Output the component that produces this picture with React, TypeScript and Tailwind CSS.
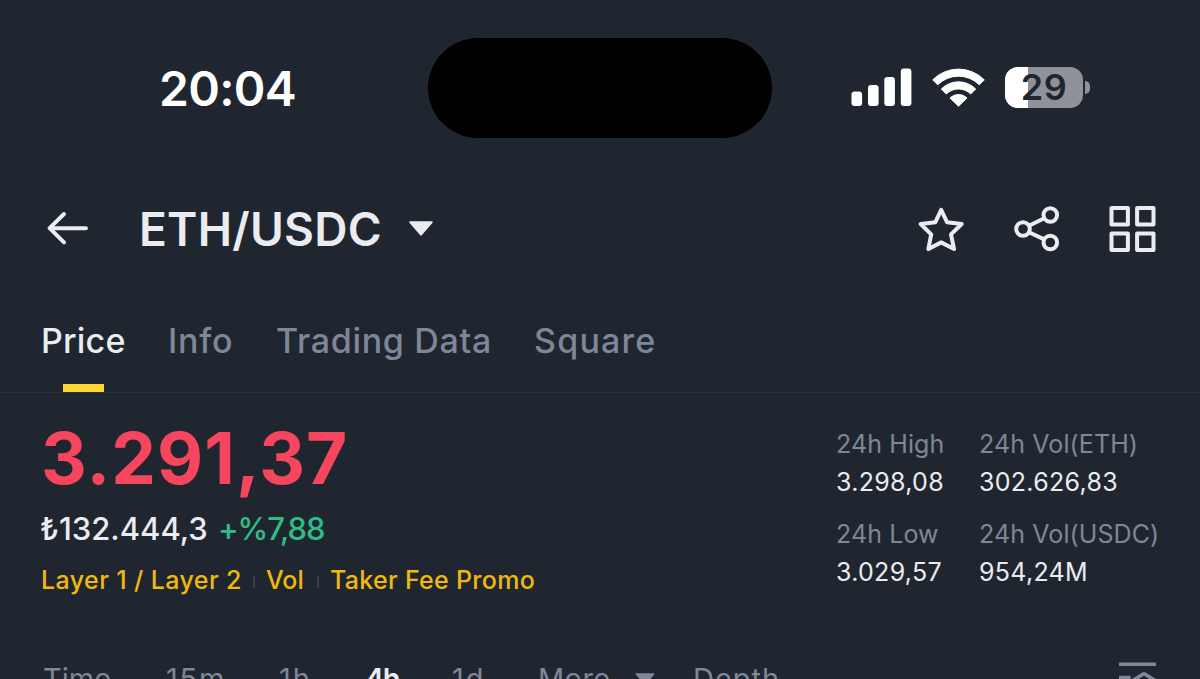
import clsx from 'clsx';

interface Tab {
  label: string;
  className: string;
}

interface Stat {
  label: string;
  value: string;
}

const tabs: Tab[] = [
  { label: 'Price', className: 'w-[127px] tracking-[0.2px]' },
  { label: 'Info', className: 'w-[108px] tracking-[0.8px]' },
  { label: 'Trading Data', className: 'w-[258px] tracking-[0.7px]' },
  { label: 'Square', className: 'tracking-[1.2px]' },
];

const stats: Stat[] = [
  { label: '24h High', value: '3.298,08' },
  { label: '24h Vol(ETH)', value: '302.626,83' },
  { label: '24h Low', value: '3.029,57' },
  { label: '24h Vol(USDC)', value: '954,24M' },
];

function SignalIcon() {
  return (
    <svg width="61" height="38" viewBox="0 0 61 38" fill="#fff">
      <rect x="0.5" y="23.5" width="10.6" height="14.5" rx="3" />
      <rect x="17" y="17" width="10.6" height="21" rx="3" />
      <rect x="33.3" y="9" width="10.6" height="29" rx="3" />
      <rect x="49.8" y="0.5" width="10.6" height="37.5" rx="3" />
    </svg>
  );
}

function WifiIcon() {
  return (
    <svg width="53" height="39" viewBox="0 0 53 39" fill="#fff" stroke="#fff" strokeWidth="1" strokeLinejoin="round">
      <path d="M0.7 11.8A36.5 36.5 0 0 1 52.3 11.8L47.3 16.8A29.5 29.5 0 0 0 5.7 16.8Z" />
      <path d="M9.3 21A24.2 24.2 0 0 1 43.7 21L38.7 26A17.3 17.3 0 0 0 14.3 26Z" />
      <path d="M18 30A12 12 0 0 1 35 30L26.5 38.2Z" />
    </svg>
  );
}

function Battery({ level }: { level: number }) {
  return (
    <div className="flex items-center gap-[2px]">
      <div className="relative flex h-[41px] w-[78px] items-center justify-center overflow-hidden rounded-[13px] bg-[#8f9299]">
        <div className="absolute inset-y-0 left-0 bg-white" style={{ width: `${level}%` }} />
        <span className="relative text-[36px] leading-none font-semibold tracking-[0.5px] text-[#202630]">{level}</span>
      </div>
      <div className="h-[13px] w-[5px] rounded-r-full bg-[#8f9299]" />
    </div>
  );
}

function StatusBar() {
  return (
    <div className="flex h-[176px] shrink-0 items-center">
      <span className="w-[428px] pt-[2px] pl-[159px] text-[48px] leading-none font-semibold tracking-[-0.7px] text-white">20:04</span>
      <div className="h-[100px] w-[344px] rounded-full bg-black" />
      <div className="flex items-center pb-[2px] pl-[79px]">
        <SignalIcon />
        <div className="w-5" />
        <WifiIcon />
        <div className="w-5" />
        <Battery level={29} />
      </div>
    </div>
  );
}

function Caret({ className }: { className: string }) {
  return (
    <svg viewBox="0 0 24 15" className={className} fill="currentColor" stroke="currentColor" strokeWidth="2" strokeLinejoin="round">
      <path d="M1.2 1.2H22.8L12 13.6Z" />
    </svg>
  );
}

function PairHeader() {
  return (
    <div className="flex h-[106px] shrink-0 items-center pr-[44px] pl-[47px] text-[#eaecef]">
      <svg width="42" height="34" viewBox="0 0 42 34" fill="none" stroke="currentColor" strokeWidth="3.9" strokeLinecap="round" strokeLinejoin="round">
        <path d="M39 16.2H3M17 2L2.6 16.2L17 30.4" />
      </svg>
      <h1 className="ml-[50px] w-[270px] text-[46px] leading-none font-semibold tracking-[0.25px]">ETH/USDC</h1>
      <Caret className="mb-[2px] h-[15px] w-6" />
      <div className="ml-auto flex items-center">
        <svg width="46" height="44" viewBox="0 0 46 44" fill="none" stroke="currentColor" strokeWidth="4" strokeLinejoin="round">
          <path d="M23.2 2.8L29 15.2L43.7 17L33 27.4L36 42L23.2 35.4L10.4 42L13.2 27.4L2.7 17L17.4 15.2Z" />
        </svg>
        <svg className="ml-[50px]" width="46" height="46" viewBox="0 0 46 46" fill="none" stroke="currentColor" strokeWidth="4">
          <circle cx="9" cy="23" r="6.8" />
          <circle cx="36.3" cy="9" r="6.8" />
          <circle cx="36.3" cy="36.5" r="6.8" />
          <path d="M15 19.8L30.2 12.2M15 26.2L30.2 33.4" />
        </svg>
        <svg className="ml-[49px]" width="47" height="46" viewBox="0 0 47 46" fill="none" stroke="currentColor" strokeWidth="4" strokeLinejoin="round">
          <rect x="2.5" y="2" width="16.4" height="16.4" />
          <rect x="28.1" y="2" width="16.4" height="16.4" />
          <rect x="2.5" y="27.5" width="16.4" height="16.4" />
          <rect x="28.1" y="27.5" width="16.4" height="16.4" />
        </svg>
      </div>
    </div>
  );
}

function TabBar() {
  return (
    <div className="flex h-[111px] shrink-0 border-b border-[#2e343e] pl-[41px]">
      {tabs.map((tab, index) => (
        <button
          key={tab.label}
          type="button"
          className={clsx(
            'flex flex-col items-start pt-[39px] text-left text-[34px] leading-[40px] font-medium whitespace-nowrap',
            tab.className,
            index === 0 ? 'text-[#eaecef]' : 'text-[#7f8697]',
          )}
        >
          {tab.label}
          {index === 0 && <span className="mt-[23px] ml-[22px] h-2 w-[41px] bg-[#fcd535]" />}
        </button>
      ))}
    </div>
  );
}

function PriceSummary() {
  return (
    <div className="flex h-[269px] shrink-0 pt-[29px] pl-[41px]">
      <div className="w-[795px]">
        <div className="text-[71px] leading-[72px] font-bold tracking-[1.1px] text-[#f6465d]">3.291,37</div>
        <div className="mt-[17px] flex text-[31px] leading-[36px] font-medium">
          <span className="-ml-px w-[178px] text-[#eaecef]">₺132.444,3</span>
          <span className="tracking-[-1.1px] text-[#2ebd85]">+%7,88</span>
        </div>
        <div className="mt-[18px] flex items-center text-[25px] leading-[30px] font-medium text-[#f0b90b]">
          <span className="w-[212px] tracking-[0.4px]">Layer 1 / Layer 2</span>
          <span className="mt-1 h-3 w-[2px] bg-[#373e48]" />
          <span className="ml-[11px] w-[51px]">Vol</span>
          <span className="mt-1 h-3 w-[2px] bg-[#373e48]" />
          <span className="ml-[11px] tracking-[0.3px]">Taker Fee Promo</span>
        </div>
      </div>
      <div className="grid grid-cols-[143px_190px] content-start gap-y-[14px] pt-[3px] text-[25px] leading-[38px] whitespace-nowrap">
        {stats.map((stat) => (
          <div key={stat.label}>
            <div className="tracking-[0.1px] text-[#7f8697]">{stat.label}</div>
            <div className="tracking-[0.3px] text-[#eaecef]">{stat.value}</div>
          </div>
        ))}
      </div>
    </div>
  );
}

function IntervalBar() {
  return (
    <div className="flex h-[34px] shrink-0 pl-[43px] text-[29px] leading-[34px] text-[#7f8697]">
      <span className="w-[123px]">Time</span>
      <span className="w-[113px] tracking-[1.8px]">15m</span>
      <span className="w-[86px] tracking-[2px]">1h</span>
      <span className="w-[87px] font-semibold tracking-[-1.5px] text-[#eaecef]">4h</span>
      <span className="w-[86px] tracking-[2px]">1d</span>
      <span className="w-[97px] tracking-[0.4px]">More</span>
      <Caret className="mt-[11px] h-3 w-5" />
      <span className="ml-[38px] tracking-[1px]">Depth</span>
      <svg className="mr-[43px] ml-auto" width="39" height="34" viewBox="0 0 39 34" fill="none" stroke="currentColor" strokeWidth="3.6">
        <path d="M1 2.2H38M1 15.5H12.5M1 28H12.5M14 19L26 11.5L38 19V28L26 34L14 28Z" />
      </svg>
    </div>
  );
}

export default function App() {
  return (
    <div className="flex h-[679px] w-[1200px] flex-col overflow-hidden bg-[#202630] font-['Inter','Liberation_Sans',sans-serif]">
      <StatusBar />
      <PairHeader />
      <TabBar />
      <PriceSummary />
      <IntervalBar />
    </div>
  );
}
